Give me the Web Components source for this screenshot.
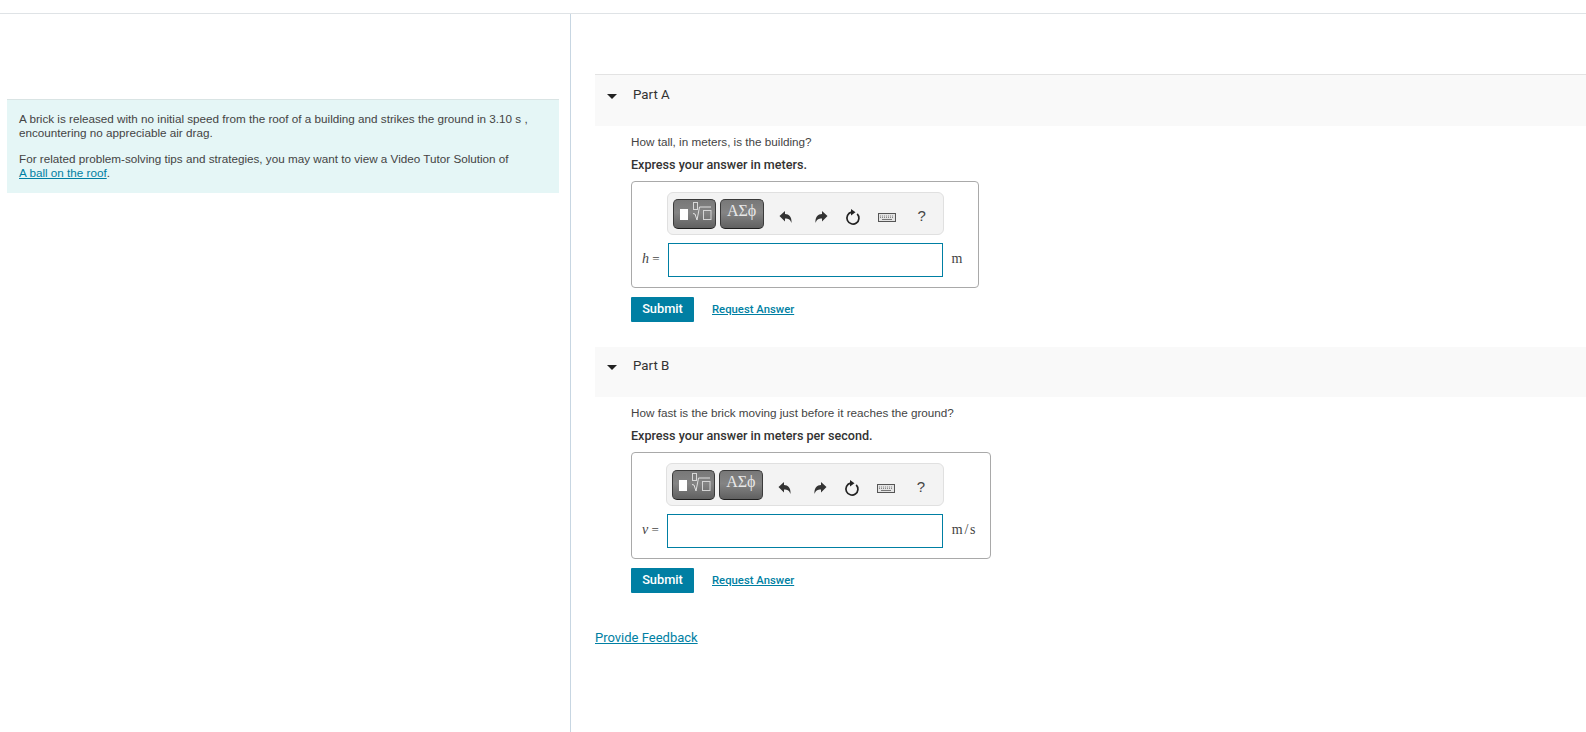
<!DOCTYPE html>
<html lang="en">
<head>
<meta charset="utf-8">
<title>A brick released from a roof</title>
<style>
  html, body { margin: 0; background: #fff; }
  body { font-family: "Liberation Sans", Arial, sans-serif; color: #333; overflow: hidden; }
  intro-panel a, .feedback { color: #007fa3; text-decoration: underline; }
  .feedback { display: inline-block; margin-top: 11px; font: 13px/18px Roboto, sans-serif; }
  .wide { --field-width: 276px; --unit-end: 13px; }
</style>
</head>
<body>
<problem-page>
  <intro-panel slot="intro">
    <p>A brick is released with no initial speed from the roof of a building and strikes the ground in 3.10 s , encountering no appreciable air drag.</p>
    <p>For related problem-solving tips and strategies, you may want to view a Video Tutor Solution of<br><a href="#">A ball on the roof</a>.</p>
  </intro-panel>
  <part-section title="Part A" border question="How tall, in meters, is the building?" hint="Express your answer in meters." variable="h" unit="m"></part-section>
  <part-section class="wide" title="Part B" question="How fast is the brick moving just before it reaches the ground?" hint="Express your answer in meters per second." variable="v" unit="m/s"></part-section>
  <a class="feedback" href="#">Provide Feedback</a>
</problem-page>

<script>
class ProblemPage extends HTMLElement {
  constructor() {
    super();
    this.attachShadow({ mode: 'open' });
    this.shadowRoot.innerHTML = `
      <style>
        :host { display: block; height: 732px; box-sizing: border-box; padding-top: 13px; }
        .panes {
          display: grid;
          grid-template-columns: 571px 1fr;
          height: 719px;
          border-top: 1px solid #dfe3e6;
        }
        .left { border-right: 1px solid #c7d6e2; padding: 85px 11px 0 7px; }
        .right { padding: 60px 0 0 24px; min-width: 0; }
      </style>
      <div class="panes">
        <div class="left"><slot name="intro"></slot></div>
        <div class="right"><slot></slot></div>
      </div>
    `;
  }
}

class IntroPanel extends HTMLElement {
  constructor() {
    super();
    this.attachShadow({ mode: 'open' });
    this.shadowRoot.innerHTML = `
      <style>
        :host {
          display: block;
          background: #e5f6f6;
          border-top: 1px solid #d9e4e4;
          padding: 12px 28px 13px 12px;
          font-size: 11.700px;
          line-height: 14px;
          color: #444;
        }
        ::slotted(p) { margin: 0 0 12px; }
        ::slotted(p:last-child) { margin-bottom: 0; }
      </style>
      <slot></slot>
    `;
  }
}

class MathToolbar extends HTMLElement {
  constructor() {
    super();
    this.attachShadow({ mode: 'open' });
    this.shadowRoot.innerHTML = `
      <style>
        :host {
          display: flex;
          align-items: center;
          height: 43px;
          box-sizing: border-box;
          padding: 0 5px;
          background: #f3f3f3;
          border: 1px solid #e0e0e0;
          border-radius: 6px;
        }
        .tpl {
          display: flex;
          align-items: center;
          justify-content: center;
          height: 30px;
          box-sizing: border-box;
          border: 1px solid #3a3a3a;
          border-bottom-color: #1e1e1e;
          border-radius: 5px;
          background: linear-gradient(#787878, #848484 45%, #606060);
          color: #e8e8e8;
          margin-right: 4px;
        }
        .tpl.math { width: 43px; }
        .tpl.sym {
          width: 44px;
          font: 16px/1 "Liberation Serif", serif;
          padding-bottom: 5px;
        }
        .tool { width: 34px; height: 30px; display: flex; align-items: center; justify-content: center; box-sizing: border-box; }
        .help { font: 15px "Liberation Sans", sans-serif; color: #444; padding: 3px 0 0 2px; }
        svg { display: block; }
      </style>
      <div class="tpl math">
        <svg width="41" height="28" viewBox="0 0 41 28">
          <rect x="6" y="9" width="8" height="11" fill="#fff"/>
          <rect x="19.500" y="2.500" width="4" height="7" fill="none" stroke="#d8d8d8"/>
          <path d="M19 13.500l2 .5 2 6 2.500-13h11.500" fill="none" stroke="#e0e0e0"/>
          <rect x="29.500" y="10.500" width="7.500" height="9" fill="none" stroke="#d4d4d4"/>
        </svg>
      </div>
      <div class="tpl sym">ΑΣϕ</div>
      <div class="tool" style="padding-left:3px">
        <svg width="14" height="14" viewBox="0 0 14 14" style="margin-top:6px"><path d="M.5 6L6 1v3c4 0 7 2.800 6.500 9-1-3.500-3-4.600-6.500-4.600V11.500z" fill="#333"/></svg>
      </div>
      <div class="tool" style="padding-left:5px">
        <svg width="14" height="14" viewBox="0 0 14 14" style="margin-top:6px"><path d="M13.500 6L8 1v3c-4 0-7 2.800-6.500 9 1-3.500 3-4.600 6.500-4.600V11.500z" fill="#333"/></svg>
      </div>
      <div class="tool">
        <svg width="16" height="19" viewBox="0 0 16 19" style="margin-top:6px"><path d="M12.200 6.800a6 6 0 1 1-5.700-1.600" fill="none" stroke="#222" stroke-width="1.700"/><path d="M6 2l4.500 3.200L6 8.500z" fill="#222"/></svg>
      </div>
      <div class="tool">
        <svg width="18" height="9" viewBox="0 0 18 9" style="margin-top:7px"><rect x=".5" y=".5" width="17" height="8" fill="#e4e4e4" stroke="#555"/><path d="M2 3h14M2 4.500h14" stroke="#888" stroke-dasharray="1 1"/><path d="M4 6.500h10" stroke="#777"/></svg>
      </div>
      <div class="tool help">?</div>
    `;
  }
}

class AnswerBox extends HTMLElement {
  static get observedAttributes() {
    return ['variable', 'unit'];
  }

  constructor() {
    super();
    this.attachShadow({ mode: 'open' });
    this.shadowRoot.innerHTML = `
      <style>
        :host {
          display: inline-grid;
          grid-template-columns: auto var(--field-width, 275px) auto;
          row-gap: 8px;
          align-items: center;
          padding: 10px 0;
          border: 1px solid #a9a9a9;
          border-radius: 4px;
          background: #fff;
        }
        math-toolbar { grid-column: 2; margin: 0 -1px; }
        .label {
          grid-column: 1;
          font: 13px "Liberation Serif", serif;
          color: #444;
          padding: 0 8px 2px 10px;
          white-space: pre;
        }
        .label i { font-style: italic; font-size: 14px; }
        input {
          grid-column: 2;
          display: block;
          box-sizing: border-box;
          width: 100%;
          height: 34px;
          margin: 0;
          padding: 0 4px;
          background: #fff;
          border: 1px solid #007fa3;
          border-radius: 0;
          outline: none;
        }
        .unit {
          grid-column: 3;
          font: 14px "Liberation Serif", serif;
          letter-spacing: 1.700px;
          color: #444;
          padding: 0 var(--unit-end, 14px) 2px 9px;
        }
      </style>
      <math-toolbar></math-toolbar>
      <span class="label"><i class="var"></i> =</span>
      <input type="text" aria-label="answer">
      <span class="unit"></span>
    `;
  }

  connectedCallback() { this._update(); }
  attributeChangedCallback() { this._update(); }

  _update() {
    this.shadowRoot.querySelector('.var').textContent = this.getAttribute('variable') || '';
    this.shadowRoot.querySelector('.unit').textContent = this.getAttribute('unit') || '';
  }
}

class PartSection extends HTMLElement {
  constructor() {
    super();
    this.attachShadow({ mode: 'open' });
    this.shadowRoot.innerHTML = `
      <style>
        :host { display: block; }
        .head {
          display: flex;
          align-items: flex-start;
          height: 50px;
          box-sizing: border-box;
          background: #f9f9f9;
          padding: 9px 0 0 12px;
          font: 13.300px/20px Roboto, sans-serif;
          color: #333;
        }
        :host([border]) .head { height: 52px; padding-top: 10px; border-top: 1px solid #e3e3e3; }
        .tri {
          width: 0; height: 0;
          margin: 9px 16px 0 0;
          border-left: 5px solid transparent;
          border-right: 5px solid transparent;
          border-top: 5px solid #222;
        }
        .body { padding: 8px 0 25px 36px; }
        .q { margin: 0; font-size: 11.700px; line-height: 16px; color: #444; }
        .hint { margin: 7px 0 8px; font: 500 12.600px/16px Roboto, sans-serif; color: #333; }
        answer-box { vertical-align: top; }
        .row { display: flex; align-items: center; gap: 18px; margin-top: 9px; }
        .submit {
          width: 63px; height: 25px;
          padding: 0 0 2px;
          background: #007fa3;
          border: 0;
          border-radius: 1px;
          color: #fff;
          font: 500 12.800px Roboto, sans-serif;
        }
        a { color: #007fa3; font: 500 11.300px Roboto, sans-serif; }
      </style>
      <div class="head"><span class="tri"></span><span class="title"></span></div>
      <div class="body">
        <p class="q"></p>
        <p class="hint"></p>
        <answer-box></answer-box>
        <div class="row">
          <button class="submit" type="button">Submit</button>
          <a href="#">Request Answer</a>
        </div>
      </div>
    `;
  }

  connectedCallback() {
    const root = this.shadowRoot;
    root.querySelector('.title').textContent = this.getAttribute('title');
    root.querySelector('.q').textContent = this.getAttribute('question');
    root.querySelector('.hint').textContent = this.getAttribute('hint');
    const box = root.querySelector('answer-box');
    box.setAttribute('variable', this.getAttribute('variable'));
    box.setAttribute('unit', this.getAttribute('unit'));
  }
}

customElements.define('math-toolbar', MathToolbar);
customElements.define('answer-box', AnswerBox);
customElements.define('part-section', PartSection);
customElements.define('intro-panel', IntroPanel);
customElements.define('problem-page', ProblemPage);
</script>
</body>
</html>
